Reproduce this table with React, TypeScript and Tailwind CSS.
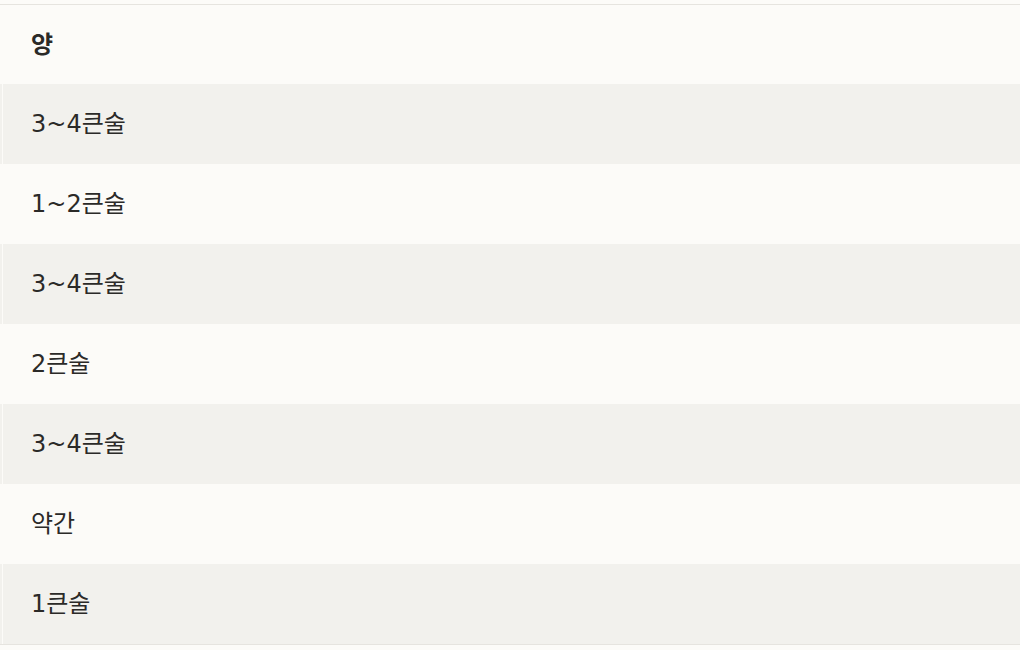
const rows = ['3~4큰술', '1~2큰술', '3~4큰술', '2큰술', '3~4큰술', '약간', '1큰술'];

const App = () => {
    return (
        <div
            className="w-[1020px] h-[650px] overflow-hidden bg-[#fcfbf8] text-[#2b2a28] pt-[4px]"
            style={{ fontFamily: '"DejaVu Sans", "Noto Sans CJK KR", sans-serif' }}
        >
            <div className="border-t border-b border-[#e6e4df]">
                <div className="h-[79px] flex items-center pl-[31px] text-[24px] font-bold">양</div>
                {rows.map((r, i) => (
                    <div
                        key={i}
                        className={
                            i % 2 === 0
                                ? 'h-[80px] flex bg-[#f2f1ed]'
                                : 'h-[80px] flex bg-[#fcfbf8]'
                        }
                    >
                        <div className="w-[2px] shrink-0" />
                        <div className={i % 2 === 0 ? 'w-[1px] shrink-0 bg-[#fcfbf8]' : 'w-[1px] shrink-0'} />
                        <div className="flex-1 flex items-center pl-[28px] text-[24px]">{r}</div>
                    </div>
                ))}
            </div>
        </div>
    );
};

export default App;
